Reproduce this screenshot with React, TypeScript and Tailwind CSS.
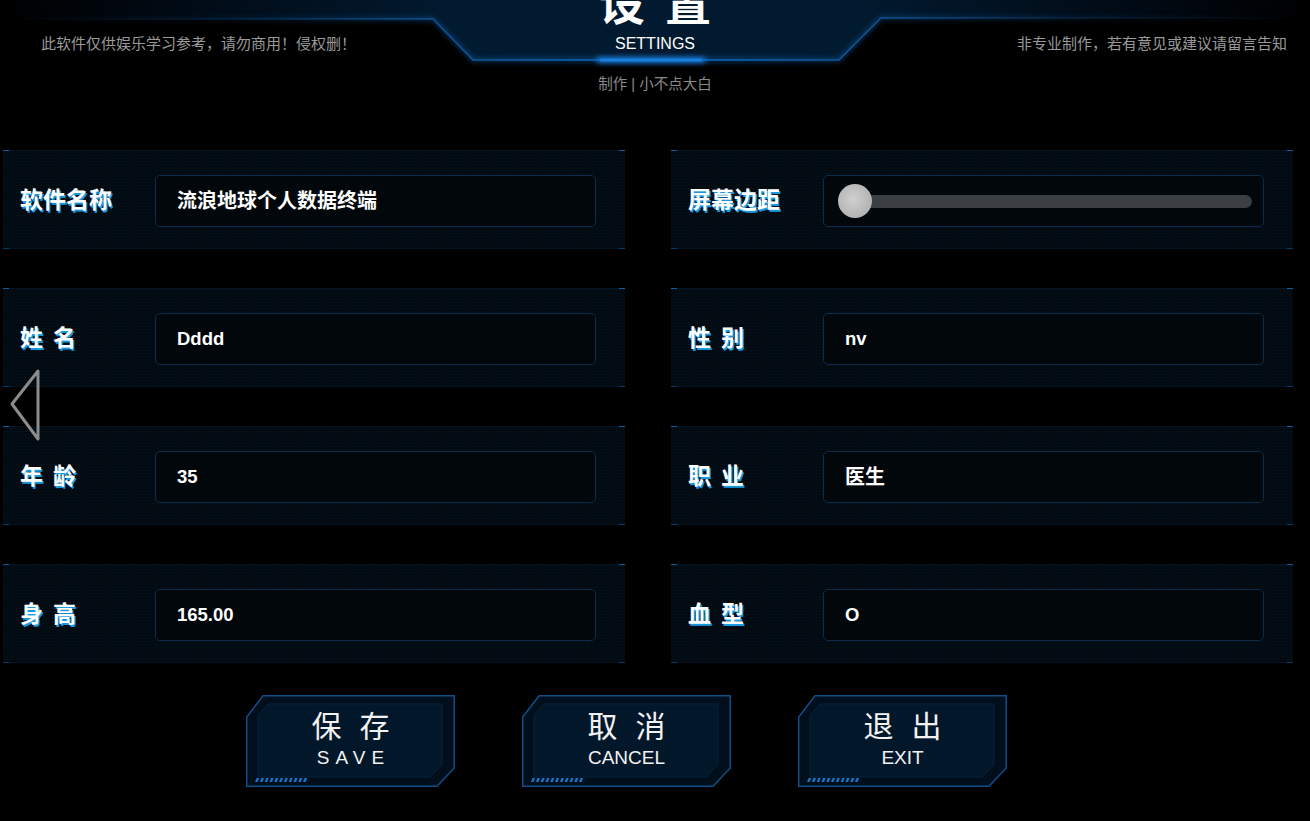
import type { ReactNode } from "react";

type Field = { label: string; value?: string; slider?: boolean };

const fields: Field[] = [
  { label: "软件名称", value: "流浪地球个人数据终端" },
  { label: "屏幕边距", slider: true },
  { label: "姓名", value: "Dddd" },
  { label: "性别", value: "nv" },
  { label: "年龄", value: "35" },
  { label: "职业", value: "医生" },
  { label: "身高", value: "165.00" },
  { label: "血型", value: "O" },
];

const actions = [
  { zh: ["保", "存"], en: "SAVE", spaced: true },
  { zh: ["取", "消"], en: "CANCEL", spaced: false },
  { zh: ["退", "出"], en: "EXIT", spaced: false },
];

const hasHan = (s: string) => /[\u4e00-\u9fff]/.test(s);

function HeaderFrame() {
  // top band: dark navy plate with a glowing edge that dips under the title
  return (
    <svg
      className="pointer-events-none absolute left-0 top-0"
      width="1310"
      height="100"
      viewBox="0 0 1310 100"
    >
      <defs>
        <linearGradient id="plate" x1="0" x2="1" y1="0" y2="0">
          <stop offset="0" stopColor="#000000" />
          <stop offset="0.15" stopColor="#010b16" />
          <stop offset="0.35" stopColor="#021a30" />
          <stop offset="0.65" stopColor="#021a30" />
          <stop offset="0.85" stopColor="#010b16" />
          <stop offset="1" stopColor="#000000" />
        </linearGradient>
        <linearGradient id="edge" x1="0" x2="1" y1="0" y2="0">
          <stop offset="0" stopColor="#0a4c88" stopOpacity="0" />
          <stop offset="0.15" stopColor="#0a4c88" stopOpacity="0.25" />
          <stop offset="0.33" stopColor="#0c5ea8" stopOpacity="0.8" />
          <stop offset="0.5" stopColor="#0e6cc2" />
          <stop offset="0.67" stopColor="#0c5ea8" stopOpacity="0.8" />
          <stop offset="0.85" stopColor="#0a4c88" stopOpacity="0.25" />
          <stop offset="1" stopColor="#0a4c88" stopOpacity="0" />
        </linearGradient>
        <filter id="soft" x="-10%" y="-200%" width="120%" height="500%">
          <feGaussianBlur stdDeviation="2.5" />
        </filter>
      </defs>
      <path d="M0,0 H1310 V18 H881 L839,60 H473 L433,19 H0 Z" fill="url(#plate)" />
      <path
        d="M0,19 H433 L473,60 H839 L881,18 H1310"
        fill="none"
        stroke="url(#edge)"
        strokeWidth="5"
        opacity="0.5"
        filter="url(#soft)"
      />
      <path
        d="M0,19 H433 L473,60 H839 L881,18 H1310"
        fill="none"
        stroke="url(#edge)"
        strokeWidth="1.5"
      />
      <rect x="596" y="57" width="110" height="6" rx="3" fill="#1472cc" filter="url(#soft)" />
      <rect x="600" y="58.5" width="102" height="3" rx="1.5" fill="#1a7fdc" />
    </svg>
  );
}

function Panel({ field }: { field: Field }) {
  const value = field.value ?? "";
  return (
    <div className="relative flex h-[99px] items-center border-y border-[#061524] bg-[#020a12] bg-[radial-gradient(#06121d_1px,transparent_1px)] bg-[length:3px_3px] pl-[17px]">
      <span className="absolute left-0 top-[-1px] h-[1px] w-[6px] bg-[#0b5fa8]" />
      <span className="absolute right-0 top-[-1px] h-[1px] w-[6px] bg-[#0b5fa8]" />
      <span className="absolute bottom-[-1px] left-0 h-[1px] w-[6px] bg-[#0a3a66]" />
      <span className="absolute bottom-[-1px] right-0 h-[1px] w-[6px] bg-[#0a3a66]" />
      <div
        className={
          "mt-[1px] w-[135px] text-[23px] font-bold leading-none text-white [text-shadow:1.5px_1.5px_0_#1898e0] " +
          (field.label.length === 2 ? "tracking-[10px]" : "tracking-normal")
        }
      >
        {field.label}
      </div>
      <div className="mt-[3px] flex h-[52px] w-[441px] items-center rounded-[5px] border border-[#0b2c4a] bg-[#02070b]">
        {field.slider ? (
          <div className="relative ml-[15px] mr-[11px] h-[13px] flex-1 rounded-full bg-[#3b3e43]">
            <div className="absolute left-0 top-0 h-[13px] w-[32px] rounded-full bg-[#c9c9c9]" />
            <div className="absolute left-[-1px] top-1/2 h-[34px] w-[34px] -translate-y-1/2 rounded-full bg-[radial-gradient(circle_at_45%_45%,#cfcfcf,#a8a8a8)]" />
          </div>
        ) : (
          <span
            className={
              "pl-[21px] font-bold text-white " + (hasHan(value) ? "text-[20px]" : "text-[18.5px]")
            }
          >
            {value}
          </span>
        )}
      </div>
    </div>
  );
}

function ActionButton({ zh, en, spaced }: { zh: string[]; en: string; spaced: boolean }) {
  const stripes: ReactNode[] = [];
  for (let i = 0; i < 11; i++) {
    const x = 9 + i * 4.8;
    stripes.push(
      <polygon
        key={i}
        points={`${x + 1.6},83 ${x + 4.2},83 ${x + 2.6},87 ${x},87`}
        fill="#1a72c2"
      />,
    );
  }
  return (
    <button
      type="button"
      className="relative flex h-[92px] w-[209px] flex-col items-center text-[#f2f2f2]"
    >
      <svg className="absolute left-0 top-0" width="209" height="92" viewBox="0 0 209 92">
        <polygon
          points="17,0.75 208.25,0.75 208.25,73 191,91.25 0.75,91.25 0.75,22"
          fill="#010f1c"
          stroke="#0f4e86"
          strokeWidth="1.5"
        />
        <polygon
          points="22,9 196,9 196,70 184,82 12,82 12,20"
          fill="#03172a"
          stroke="#06223a"
          strokeWidth="1"
        />
        {stripes}
      </svg>
      <span className="relative mt-[17px] flex gap-[18px] text-[30px] leading-none">
        <span>{zh[0]}</span>
        <span>{zh[1]}</span>
      </span>
      <span
        className={
          "relative mt-[6px] font-['Liberation_Sans',sans-serif] text-[19px] leading-none " +
          (spaced ? "pl-[6px] tracking-[6px]" : "tracking-normal")
        }
      >
        {en}
      </span>
    </button>
  );
}

export default function App() {
  return (
    <div className="relative h-[821px] w-[1310px] overflow-hidden bg-black font-['Liberation_Sans','Noto_Sans_CJK_SC',sans-serif]">
      <header className="relative h-[150px]">
        <HeaderFrame />
        <div className="relative grid grid-cols-[1fr_auto_1fr]">
          <p className="pl-[41px] pt-[33px] text-[15px] text-[#9a9a9a]">
            此软件仅供娱乐学习参考，请勿商用！侵权删！
          </p>
          <div className="flex flex-col items-center">
            <h1 className="mt-[-19px] flex gap-[20px] text-[46px] font-bold leading-none text-white">
              <span>设</span>
              <span>置</span>
            </h1>
            <div className="mt-[9px] text-[16px] leading-none text-white">SETTINGS</div>
            <div className="mt-[25px] text-[14.5px] leading-none text-[#8a8a8a]">制作 | 小不点大白</div>
          </div>
          <p className="pr-[23px] pt-[33px] text-right text-[15px] text-[#9a9a9a]">
            非专业制作，若有意见或建议请留言告知
          </p>
        </div>
      </header>

      <main className="ml-[3px] grid grid-cols-[622px_622px] gap-x-[46px] gap-y-[39px]">
        {fields.map((f) => (
          <Panel key={f.label} field={f} />
        ))}
      </main>

      <div className="ml-[246px] mt-[32px] flex gap-[67px]">
        {actions.map((a) => (
          <ActionButton key={a.en} zh={a.zh} en={a.en} spaced={a.spaced} />
        ))}
      </div>

      {/* back arrow floating over the left column */}
      <svg className="absolute left-[8px] top-[366px]" width="34" height="78" viewBox="0 0 34 78">
        <polygon
          points="30,5 4,38 30,73"
          fill="none"
          stroke="#8c8c8c"
          strokeWidth="3"
          strokeLinejoin="round"
        />
      </svg>
    </div>
  );
}
